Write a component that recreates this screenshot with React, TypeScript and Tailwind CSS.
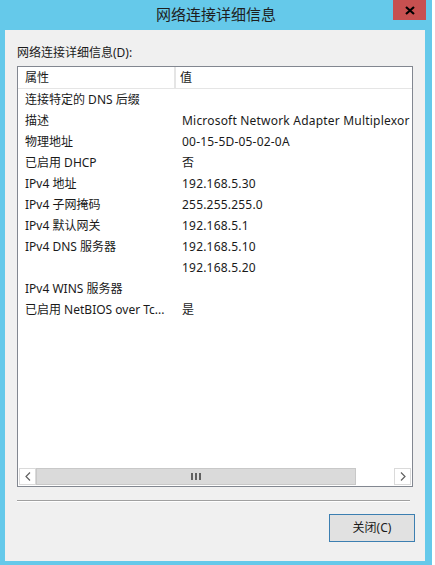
import React from "react";

const rows: [string, string][] = [
  ["连接特定的 DNS 后缀", ""],
  ["描述", "Microsoft Network Adapter Multiplexor"],
  ["物理地址", "00-15-5D-05-02-0A"],
  ["已启用 DHCP", "否"],
  ["IPv4 地址", "192.168.5.30"],
  ["IPv4 子网掩码", "255.255.255.0"],
  ["IPv4 默认网关", "192.168.5.1"],
  ["IPv4 DNS 服务器", "192.168.5.10"],
  ["", "192.168.5.20"],
  ["IPv4 WINS 服务器", ""],
  ["已启用 NetBIOS over Tc...", "是"],
];

const font = { fontFamily: '"Noto Sans", "Noto Sans CJK SC", sans-serif' };

export default function App() {
  return (
    <div className="w-[435px] h-[565px] flex bg-white overflow-hidden" style={font}>
      <div className="w-[432px] h-full bg-[#65c9ea] flex flex-col">
        {/* title bar */}
        <div className="h-[30px] grid grid-cols-[1fr_auto_1fr] items-start">
          <div />
          <div className="pt-[4px] text-[15px] leading-[20px] text-[#1e1e1e]">网络连接详细信息</div>
          <div className="flex justify-end pr-[6px]">
            <div className="w-[33px] h-[20px] bg-[#c75050] flex items-center justify-center">
              <svg width="10" height="9" viewBox="0 0 10 9">
                <path d="M1 1 L9 8 M9 1 L1 8" stroke="#000" strokeWidth="2.2" />
              </svg>
            </div>
          </div>
        </div>

        {/* client area */}
        <div className="flex-1 ml-[5px] mr-[7px] mb-[4px] bg-[#f0f0f0] flex flex-col px-[12px] pt-[15px]">
          <div className="text-[12px] leading-[16px] text-[#1a1a1a] h-[21px]">网络连接详细信息(D):</div>

          <div className="h-[421px] border border-[#828790] bg-white flex flex-col">
            <div className="h-[22px] flex text-[12px] text-[#1a1a1a] border-b border-[#e5e5e5]">
              <div className="w-[158px] pl-[7px] flex items-center border-r-2 border-[#e5e5e5]">属性</div>
              <div className="flex-1 pl-[4px] flex items-center">值</div>
            </div>
            <div className="flex-1 overflow-hidden">
              {rows.map(([k, v], i) => (
                <div key={i} className="h-[21px] flex items-center text-[12px] text-[#1a1a1a] whitespace-nowrap">
                  <div className="w-[164px] pl-[7px] shrink-0">{k}</div>
                  <div className="tracking-[0.2px]">{v}</div>
                </div>
              ))}
            </div>
            {/* horizontal scrollbar */}
            <div className="h-[17px] mx-[1px] mb-[1px] flex bg-white">
              <div className="w-[17px] border border-[#dadada] flex items-center justify-center">
                <svg width="6" height="9" viewBox="0 0 6 9">
                  <path d="M5 0.5 L1 4.5 L5 8.5" stroke="#606060" strokeWidth="1.2" fill="none" />
                </svg>
              </div>
              <div className="w-[320px] bg-[#dadada] border border-[#c8c8c8] flex items-center justify-center">
                <div className="flex gap-[2px]">
                  <div className="w-[2px] h-[7px] bg-[#606060]" />
                  <div className="w-[2px] h-[7px] bg-[#606060]" />
                  <div className="w-[2px] h-[7px] bg-[#606060]" />
                </div>
              </div>
              <div className="flex-1" />
              <div className="w-[17px] border border-[#dadada] flex items-center justify-center">
                <svg width="6" height="9" viewBox="0 0 6 9">
                  <path d="M1 0.5 L5 4.5 L1 8.5" stroke="#606060" strokeWidth="1.2" fill="none" />
                </svg>
              </div>
            </div>
          </div>

          <div className="mt-[13px] h-[2px] mr-[3px] border-t border-[#a0a0a0] border-b border-b-white" />

          <div className="flex justify-end mt-[12px] mr-[-2px]">
            <div className="w-[86px] h-[28px] bg-[#e1e1e1] border border-[#3c7fb1] flex items-center justify-center text-[12px] text-[#1a1a1a]">
              关闭(C)
            </div>
          </div>
        </div>
      </div>
    </div>
  );
}
